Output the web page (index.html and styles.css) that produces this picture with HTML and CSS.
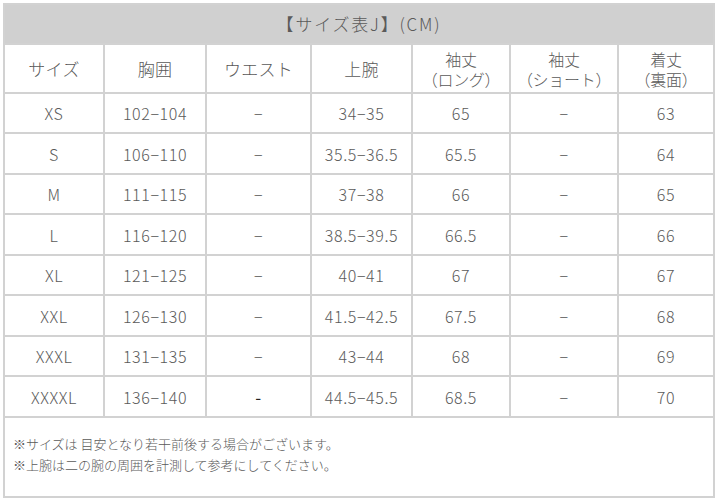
FILE: index.html
```html
<!DOCTYPE html>
<html lang="ja">
<head>
<meta charset="utf-8">
<link rel="stylesheet" href="styles.css">
</head>
<body>
<table class="size-table">
  <colgroup>
    <col class="c1"><col class="c2"><col class="c3"><col class="c4"><col class="c5"><col class="c6"><col class="c7">
  </colgroup>
  <thead>
    <tr class="title-row"><th colspan="7">【サイズ表J】(CM)</th></tr>
    <tr class="head-row">
      <th>サイズ</th><th>胸囲</th><th>ウエスト</th><th>上腕</th>
      <th class="two">袖丈<br>（ロング）</th><th class="two">袖丈<br>（ショート）</th><th class="two">着丈<br>（裏面）</th>
    </tr>
  </thead>
  <tbody>
    <tr><td>XS</td><td>102−104</td><td class="dash">−</td><td>34−35</td><td>65</td><td class="dash">−</td><td>63</td></tr>
    <tr><td>S</td><td>106−110</td><td class="dash">−</td><td>35.5−36.5</td><td>65.5</td><td class="dash">−</td><td>64</td></tr>
    <tr><td>M</td><td>111−115</td><td class="dash">−</td><td>37−38</td><td>66</td><td class="dash">−</td><td>65</td></tr>
    <tr><td>L</td><td>116−120</td><td class="dash">−</td><td>38.5−39.5</td><td>66.5</td><td class="dash">−</td><td>66</td></tr>
    <tr><td>XL</td><td>121−125</td><td class="dash">−</td><td>40−41</td><td>67</td><td class="dash">−</td><td>67</td></tr>
    <tr><td>XXL</td><td>126−130</td><td class="dash">−</td><td>41.5−42.5</td><td>67.5</td><td class="dash">−</td><td>68</td></tr>
    <tr><td>XXXL</td><td>131−135</td><td class="dash">−</td><td>43−44</td><td>68</td><td class="dash">−</td><td>69</td></tr>
    <tr><td>XXXXL</td><td>136−140</td><td class="dash dark">-</td><td>44.5−45.5</td><td>68.5</td><td class="dash">−</td><td>70</td></tr>
    <tr class="notes-row"><td colspan="7">※サイズは 目安となり若干前後する場合がございます。<br>※上腕は二の腕の周囲を計測して参考にしてください。</td></tr>
  </tbody>
</table>
</body>
</html>
```

FILE: styles.css
```css
html, body {
  margin: 0;
  padding: 0;
  background: #ffffff;
}
body {
  padding: 3px 0 0 3px;
  font-family: "Noto Sans CJK JP", "Noto Sans", sans-serif;
  color: #5a5a5a;
}
.size-table {
  border-collapse: separate;
  border-spacing: 0;
  table-layout: fixed;
  width: 712px;
  border-left: 2px solid #d2d2d2;
  border-top: 2px solid #d2d2d2;
}
.c1 { width: 100px; }
.c2 { width: 102px; }
.c3 { width: 105px; }
.c4 { width: 101px; }
.c5 { width: 98px; }
.c6 { width: 108px; }
.c7 { width: 96px; }
.size-table th,
.size-table td {
  border-right: 2px solid #d2d2d2;
  border-bottom: 2px solid #d2d2d2;
  padding: 0;
  text-align: center;
  vertical-align: middle;
  font-weight: 300;
  font-size: 16px;
  line-height: 18px;
  letter-spacing: 0.6px;
  color: #5a5a5a;
  box-sizing: border-box;
}
.title-row th {
  background: #d0d0d0;
  height: 40px;
  font-size: 17px;
  letter-spacing: 1.8px;
  color: #5a5a5a;
}
.head-row th {
  height: 49px;
  font-size: 17px;
  line-height: 19px;
  letter-spacing: 0.3px;
}
.head-row th.two {
  padding-top: 0;
  font-size: 16px;
  line-height: 20px;
  letter-spacing: -0.3px;
}
.head-row th.two .line2 { display: block; }
tbody tr { height: 40px; }
tbody tr:nth-child(even) { height: 41px; }
tbody td { height: 40px; }
tbody tr:nth-child(even) td { height: 41px; }
.dash { color: #8a8a8a; }
.dash.dark { color: #222222; font-size: 17px; font-weight: 400; }
.size-table td.wide { letter-spacing: 1.5px; }
.size-table .notes-row td {
  height: 80px;
  text-align: left;
  vertical-align: top;
  padding: 15px 0 0 8px;
  font-size: 13px;
  line-height: 21px;
  letter-spacing: 0;
  color: #5a5a5a;
}
```
